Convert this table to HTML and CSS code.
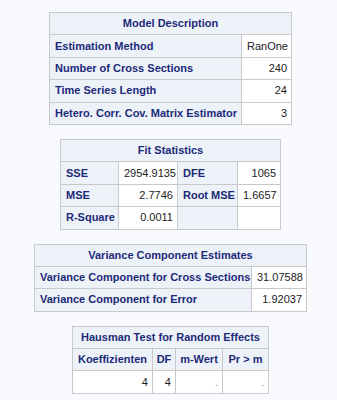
FILE: index.html
```html
<!DOCTYPE html>
<html>
<head>
<meta charset="utf-8">
<link rel="stylesheet" href="styles.css">
</head>
<body>
<div class="page">
  <table class="sas t1">
    <colgroup><col class="c1a"><col class="c1b"></colgroup>
    <tr><th colspan="2" class="title">Model Description</th></tr>
    <tr><th class="rh">Estimation Method</th><td>RanOne</td></tr>
    <tr><th class="rh">Number of Cross Sections</th><td>240</td></tr>
    <tr><th class="rh">Time Series Length</th><td>24</td></tr>
    <tr><th class="rh">Hetero. Corr. Cov. Matrix Estimator</th><td>3</td></tr>
  </table>

  <table class="sas t2">
    <colgroup><col class="c2a"><col class="c2b"><col class="c2c"><col class="c2d"></colgroup>
    <tr><th colspan="4" class="title">Fit Statistics</th></tr>
    <tr><th class="rh">SSE</th><td>2954.9135</td><th class="rh">DFE</th><td>1065</td></tr>
    <tr><th class="rh">MSE</th><td>2.7746</td><th class="rh">Root MSE</th><td>1.6657</td></tr>
    <tr><th class="rh">R-Square</th><td>0.0011</td><th class="rh"></th><td></td></tr>
  </table>

  <table class="sas t3">
    <colgroup><col class="c3a"><col class="c3b"></colgroup>
    <tr><th colspan="2" class="title">Variance Component Estimates</th></tr>
    <tr><th class="rh">Variance Component for Cross Sections</th><td>31.07588</td></tr>
    <tr><th class="rh">Variance Component for Error</th><td>1.92037</td></tr>
  </table>

  <table class="sas t4">
    <colgroup><col class="c4a"><col class="c4b"><col class="c4c"><col class="c4d"></colgroup>
    <tr><th colspan="4" class="title">Hausman Test for Random Effects</th></tr>
    <tr><th class="ch">Koeffizienten</th><th class="ch">DF</th><th class="ch">m-Wert</th><th class="ch">Pr &gt; m</th></tr>
    <tr><td>4</td><td>4</td><td class="dot">.</td><td class="dot">.</td></tr>
  </table>
</div>
</body>
</html>
```

FILE: styles.css
```css
html, body {
  margin: 0;
  padding: 0;
  background: #f9fafd;
}

.page {
  padding: 12px 0 0 4px;
  display: flex;
  flex-direction: column;
  align-items: center;
  gap: 14px;
  font-family: "Liberation Sans", Arial, sans-serif;
  font-size: 11px;
}

.sas {
  border-collapse: collapse;
  table-layout: fixed;
  border: 1px solid #c4c4c4;
}

.sas th,
.sas td {
  border: 1px solid #c9c9c9;
  height: 22.4px;
  padding: 0 4px 0 5px;
  box-sizing: border-box;
  white-space: nowrap;
  line-height: 13px;
}

.sas th {
  background: #edf2f9;
  color: #1c2a78;
  font-weight: bold;
  text-align: left;
}

.sas th.title,
.sas th.ch {
  text-align: center;
  padding: 0 3px;
}

.sas td {
  background: #ffffff;
  color: #222222;
  text-align: right;
}

.sas td.dot {
  color: #999999;
}

.t1 { width: 242px; }
.c1a { width: 192px; }
.c1b { width: 50px; }

.t2 { width: 220px; }
.c2a { width: 58px; }
.c2b { width: 59px; }
.c2c { width: 60px; }
.c2d { width: 43px; }

.t3 { width: 272px; }
.c3a { width: 217px; }
.c3b { width: 55px; }

.t4 { width: 196px; }
.c4a { width: 80px; }
.c4b { width: 23px; }
.c4c { width: 47px; }
.c4d { width: 46px; }
```
